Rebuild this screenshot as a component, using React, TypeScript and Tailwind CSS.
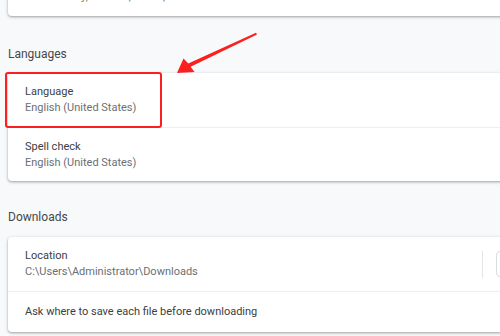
import type { ReactNode } from 'react';

const font = { fontFamily: 'Roboto, "Liberation Sans", Arial, sans-serif' };

function Card({ children, className = '' }: { children: ReactNode; className?: string }) {
  return (
    <div
      className={`ml-2 w-[575px] rounded-[4px] bg-white shadow-[0_1px_2px_0_rgba(60,64,67,0.3),0_1px_3px_1px_rgba(60,64,67,0.15)] ${className}`}
    >
      {children}
    </div>
  );
}

function Row({
  label,
  sub,
  divider,
  right,
}: {
  label: string;
  sub?: string;
  divider?: boolean;
  right?: ReactNode;
}) {
  return (
    <div
      className={`flex items-center px-[17px] ${sub ? 'h-[54px]' : 'h-[41px]'} ${
        divider ? 'border-t border-[#eceef0]' : ''
      }`}
    >
      <div className="flex-1">
        <div className="text-[11px] leading-[16px] text-[#3c4043]">{label}</div>
        {sub && <div className="text-[11px] leading-[16px] text-[#6b6f73]">{sub}</div>}
      </div>
      {right}
    </div>
  );
}

function Heading({ children, className }: { children: ReactNode; className: string }) {
  return <div className={`pl-2 text-[12px] leading-[16px] text-[#45484c] ${className}`}>{children}</div>;
}

export default function App() {
  return (
    <div className="relative h-[336px] w-[500px] overflow-hidden bg-[#f8f9fa]" style={font}>
      <Card className="-mt-[38px]">
        <Row label="Clear browsing data" sub="Clear history, cookies, cache, and more" />
      </Card>

      <Heading className="pt-[30px] pb-[11px]">Languages</Heading>
      <Card>
        <Row label="Language" sub="English (United States)" />
        <Row label="Spell check" sub="English (United States)" divider />
      </Card>

      <Heading className="pt-[28px] pb-[12px]">Downloads</Heading>
      <Card>
        <Row
          label="Location"
          sub="C:\Users\Administrator\Downloads"
          right={
            <div className="flex items-center">
              <div className="mr-[13px] h-[27px] w-px bg-[#e3e5e8]" />
              <div className="flex h-[26px] w-[70px] items-center justify-center rounded-[4px] border border-[#dadce0] text-[11px] text-[#1a73e8]">
                Change
              </div>
            </div>
          }
        />
        <Row label="Ask where to save each file before downloading" divider />
      </Card>

      {/* annotation overlay */}
      <div className="pointer-events-none absolute left-[5px] top-[72px] h-[56px] w-[157px] rounded-[3px] border-2 border-[#fb1f1f]" />
      <svg className="pointer-events-none absolute left-0 top-0" width="500" height="336" viewBox="0 0 500 336">
        <path
          d="M177 73 L183.5 58.5 L188.3 63.6 L256 32.8 L257 34.6 L190.6 66.8 L194.5 72 Z"
          fill="#fb1f1f"
        />
      </svg>
    </div>
  );
}
